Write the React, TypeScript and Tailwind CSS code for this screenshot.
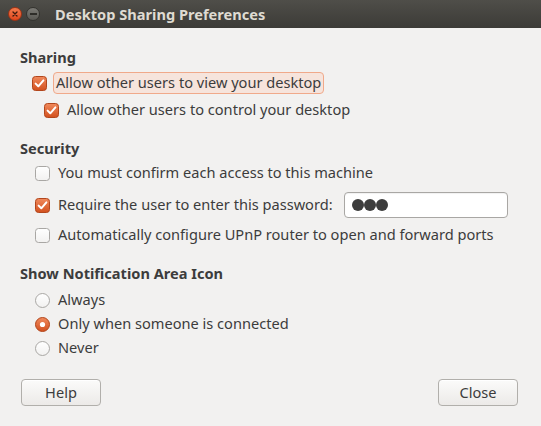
import React, { useState } from 'react';

const font = { fontFamily: '"Noto Sans", "Open Sans", sans-serif' };

function CheckBox({ checked }: { checked: boolean }) {
  return (
    <svg width="15" height="15" viewBox="0 0 15 15" className="shrink-0">
      <defs>
        <linearGradient id="cbOn" x1="0" y1="0" x2="0" y2="1">
          <stop offset="0" stopColor="#f08a5d" />
          <stop offset="1" stopColor="#d2501e" />
        </linearGradient>
        <linearGradient id="cbOff" x1="0" y1="0" x2="0" y2="1">
          <stop offset="0" stopColor="#ffffff" />
          <stop offset="1" stopColor="#f2f1f0" />
        </linearGradient>
      </defs>
      {checked ? (
        <>
          <rect x="0.5" y="0.5" width="14" height="14" rx="3" fill="url(#cbOn)" stroke="#b2461c" />
          <path d="M3.6 7.6 L6.3 10.3 L11.4 4.4" fill="none" stroke="#ffffff" strokeWidth="2" strokeLinecap="round" strokeLinejoin="round" />
        </>
      ) : (
        <rect x="0.5" y="0.5" width="14" height="14" rx="3" fill="url(#cbOff)" stroke="#a9a7a4" />
      )}
    </svg>
  );
}

function Radio({ checked }: { checked: boolean }) {
  return (
    <svg width="15" height="15" viewBox="0 0 15 15" className="shrink-0">
      <defs>
        <linearGradient id="rdOn" x1="0" y1="0" x2="0" y2="1">
          <stop offset="0" stopColor="#f08a5d" />
          <stop offset="1" stopColor="#d2501e" />
        </linearGradient>
        <linearGradient id="rdOff" x1="0" y1="0" x2="0" y2="1">
          <stop offset="0" stopColor="#ffffff" />
          <stop offset="1" stopColor="#f2f1f0" />
        </linearGradient>
      </defs>
      {checked ? (
        <>
          <circle cx="7.5" cy="7.5" r="7" fill="url(#rdOn)" stroke="#b2461c" />
          <circle cx="7.5" cy="7.5" r="2.6" fill="#ffffff" />
        </>
      ) : (
        <circle cx="7.5" cy="7.5" r="7" fill="url(#rdOff)" stroke="#a9a7a4" />
      )}
    </svg>
  );
}

function Heading({ children, className = '' }: { children: React.ReactNode; className?: string }) {
  return <div className={`h-5 leading-5 font-bold text-[14.6px] text-[#3c3c3c] ${className}`}>{children}</div>;
}

function Button({ label }: { label: string }) {
  return (
    <button className="w-[80px] h-[27px] rounded-[4px] border border-[#b1afab] bg-gradient-to-b from-[#fbfbfa] to-[#eceae8] text-[14.6px] text-[#3c3c3c] shadow-[inset_0_1px_0_#ffffff]">
      {label}
    </button>
  );
}

export default function App() {
  const [notify, setNotify] = useState('connected');

  return (
    <div className="w-[541px] h-[426px] bg-[#f2f1f0] flex flex-col overflow-hidden" style={font}>
      {/* window title bar */}
      <div className="h-[28px] shrink-0 bg-gradient-to-b from-[#4f4e49] to-[#3c3b37] flex items-center">
        <div className="ml-[8px] w-[14px] h-[14px] rounded-full bg-gradient-to-b from-[#f47a4c] to-[#e0461b] border border-[#9e3315] flex items-center justify-center">
          <svg width="6" height="6" viewBox="0 0 6 6">
            <path d="M1 1 L5 5 M5 1 L1 5" stroke="#3c1a0e" strokeWidth="1.3" strokeLinecap="round" />
          </svg>
        </div>
        <div className="ml-[4px] w-[14px] h-[14px] rounded-full bg-gradient-to-b from-[#7b7a75] to-[#5a5954] border border-[#34332f] flex items-center justify-center">
          <div className="w-[7px] h-[1.5px] bg-[#2e2d29]" />
        </div>
        <div className="ml-[15px] text-[14.6px] font-bold text-[#dfdbd2] leading-none">Desktop Sharing Preferences</div>
      </div>

      <div className="flex flex-col px-[20px] pt-[19px] text-[14.6px] text-[#3c3c3c]">
        <Heading>Sharing</Heading>
        <div className="mt-[5px] h-[22px] flex items-center pl-[12px]">
          <CheckBox checked />
          <span className="ml-[6px] h-[22px] px-[2px] flex items-center rounded-[4px] border border-[#f0a98a] bg-[#f6e4dc]">
            Allow other users to view your desktop
          </span>
        </div>
        <div className="mt-[5px] h-[22px] flex items-center pl-[24px]">
          <CheckBox checked />
          <span className="ml-[8px]">Allow other users to control your desktop</span>
        </div>

        <Heading className="mt-[17px]">Security</Heading>
        <div className="mt-[4px] h-[22px] flex items-center pl-[15px]">
          <CheckBox checked={false} />
          <span className="ml-[8px]">You must confirm each access to this machine</span>
        </div>
        <div className="mt-[8px] h-[26px] flex items-center pl-[15px]">
          <CheckBox checked />
          <span className="ml-[8px]">Require the user to enter this password:</span>
          <div className="ml-auto mr-[13px] w-[164px] h-[26px] rounded-[4px] border border-[#a9a7a4] bg-white flex items-center pl-[7px] shadow-[inset_0_1px_1px_rgba(0,0,0,0.06)]">
            <span className="w-[12px] h-[12px] rounded-full bg-[#3c3c3c]" />
            <span className="w-[12px] h-[12px] rounded-full bg-[#3c3c3c]" />
            <span className="w-[12px] h-[12px] rounded-full bg-[#3c3c3c]" />
          </div>
        </div>
        <div className="mt-[6px] h-[22px] flex items-center pl-[15px]">
          <CheckBox checked={false} />
          <span className="ml-[8px]">Automatically configure UPnP router to open and forward ports</span>
        </div>

        <Heading className="mt-[17px]">Show Notification Area Icon</Heading>
        <div className="mt-[5px] flex flex-col pl-[15px]">
          {[
            ['always', 'Always'],
            ['connected', 'Only when someone is connected'],
            ['never', 'Never'],
          ].map(([key, label]) => (
            <div key={key} className="h-[24px] flex items-center cursor-default" onClick={() => setNotify(key)}>
              <Radio checked={notify === key} />
              <span className="ml-[8px]">{label}</span>
            </div>
          ))}
        </div>

        <div className="mt-[19px] flex justify-between pl-[1px] pr-[3px]">
          <Button label="Help" />
          <Button label="Close" />
        </div>
      </div>
    </div>
  );
}
